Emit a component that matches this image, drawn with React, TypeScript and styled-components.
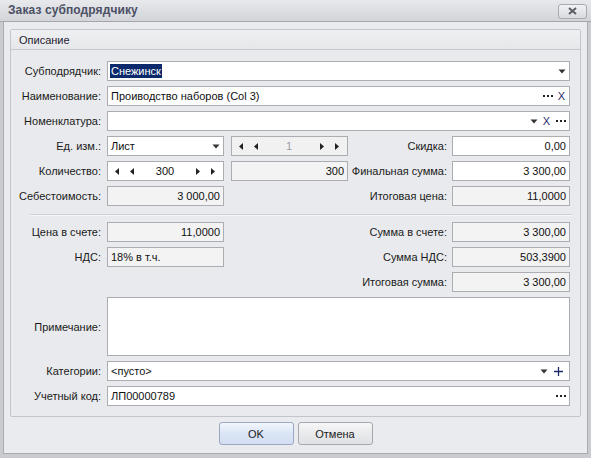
import React from "react";
import styled, { createGlobalStyle } from "styled-components";

const Global = createGlobalStyle`
  html, body { margin: 0; padding: 0; }
  body { width: 591px; height: 458px; overflow: hidden; background: #eaebee; font-family: "Liberation Sans", Arial, sans-serif; }
`;

const Window = styled.div`
  box-sizing: border-box;
  width: 591px;
  height: 458px;
  display: flex;
  flex-direction: column;
  background: #eaebee;
  border-left: 3px solid #c9cbd1;
  border-right: 3px solid #c9cbd1;
  border-bottom: 4px solid #c9cbd1;
  box-shadow: inset 1px 0 0 #a9abb1, inset -1px 0 0 #a9abb1, inset 0 -1px 0 #a9abb1;
`;

const TitleBar = styled.div`
  height: 22px;
  margin: 0 -3px;
  box-sizing: border-box;
  display: flex;
  align-items: center;
  justify-content: space-between;
  padding: 0 4px 1px 8px;
  background: linear-gradient(#e8e9ec, #d2d4d9);
  border-bottom: 1px solid #a4a6ac;
`;

const Title = styled.div`
  font-weight: bold;
  font-size: 12px;
  color: #4b5064;
  letter-spacing: 0.1px;
`;

const CloseButton = styled.div`
  width: 29px;
  height: 15px;
  box-sizing: border-box;
  border: 1px solid #a7a9ae;
  border-radius: 3px;
  background: linear-gradient(#f1f2f4, #d9dadf);
  display: flex;
  align-items: center;
  justify-content: center;
  margin-top: 2px;
`;

const Body = styled.div`
  flex: 1;
  display: flex;
  flex-direction: column;
  padding: 7px 7px 0 7px;
`;

const Group = styled.div`
  border: 1px solid #c3c5cb;
  border-radius: 2px;
  background: #e9eaed;
`;

const GroupHeader = styled.div`
  height: 20px;
  box-sizing: border-box;
  padding: 0 0 0 8px;
  display: flex;
  align-items: center;
  font-size: 11px;
  color: #1e2230;
  background: linear-gradient(#eff0f2, #e6e7ea);
  border-bottom: 1px solid #c6c8cd;
`;

const Form = styled.div`
  display: grid;
  grid-template-columns: 96px 117px 7px 117px 104px 118px;
  grid-auto-rows: auto;
  row-gap: 5px;
  padding: 11px 0 10px 0;
`;

const Label = styled.div<{ $col?: number }>`
  grid-column: ${(p) => p.$col ?? 1};
  display: flex;
  align-items: center;
  justify-content: flex-end;
  padding-right: ${(p) => (p.$col === 5 ? 5 : 6)}px;
  font-size: 11px;
  color: #1a1a1a;
  white-space: nowrap;
`;

const Field = styled.div<{ $span?: string; $ro?: boolean; $right?: boolean; $tall?: boolean }>`
  grid-column: ${(p) => p.$span ?? "2"};
  height: ${(p) => (p.$tall ? 59 : 20)}px;
  box-sizing: border-box;
  border: 1px solid #abadb2;
  background: ${(p) => (p.$ro ? "#f3f3f4" : "#ffffff")};
  display: flex;
  align-items: center;
  justify-content: ${(p) => (p.$right ? "flex-end" : "flex-start")};
  padding: 0 3px 0 3px;
  font-size: 11px;
  color: #111;
  white-space: nowrap;
  overflow: hidden;
`;

const Value = styled.span`
  flex: 1;
`;

const Selected = styled.span`
  background: #0c2a6b;
  color: #fff;
  padding: 1px 1px;
  margin-left: -1px;
`;

const Buttons = styled.div`
  display: flex;
  align-items: center;
  gap: 5px;
  margin-left: 6px;
`;

const Cross = styled.span`
  font-size: 11px;
  color: #1f2b6a;
  line-height: 1;
  padding-right: 1px;
`;

const SepRow = styled.div`
  grid-column: 1 / -1;
  height: 6px;
  display: flex;
  align-items: center;
  padding-left: 19px;
  margin-right: -2px;
`;

const SepLine = styled.div`
  flex: 1;
  height: 1px;
  background: #cdd0d4;
  box-shadow: 0 1px 0 #f7f7f9;
`;

const Spinner = styled.div<{ $ro?: boolean; $span: string }>`
  grid-column: ${(p) => p.$span};
  height: 20px;
  box-sizing: border-box;
  border: 1px solid #abadb2;
  background: ${(p) => (p.$ro ? "#f1f1f2" : "#ffffff")};
  display: flex;
  align-items: center;
  padding: 0 8px 0 7px;
  font-size: 11px;
`;

const SpinValue = styled.span<{ $dim?: boolean }>`
  flex: 1;
  text-align: center;
  color: ${(p) => (p.$dim ? "#9a9ca2" : "#111")};
`;

const Arrows = styled.span`
  display: flex;
  gap: 11px;
`;

const Footer = styled.div`
  flex: 1;
  display: flex;
  justify-content: center;
  align-items: flex-start;
  gap: 4px;
  padding-top: 5px;
`;

const Button = styled.div<{ $primary?: boolean }>`
  width: 75px;
  height: 23px;
  box-sizing: border-box;
  border: 1px solid ${(p) => (p.$primary ? "#9aa8c2" : "#a6a8ae")};
  border-radius: 3px;
  background: ${(p) =>
    p.$primary
      ? "linear-gradient(#f2f6fd, #dbe5f6 50%, #d3def3)"
      : "linear-gradient(#f7f7f8, #e9eaec 50%, #e0e1e5)"};
  display: flex;
  align-items: center;
  justify-content: center;
  font-size: 11px;
  color: #1a1a1a;
`;

const Tri = ({ dir }: { dir: "l" | "r" | "d" }) => {
  if (dir === "d")
    return (
      <svg width="8" height="5" viewBox="0 0 8 5">
        <path d="M0.5 0.5h7L4 4.5z" fill="#333" />
      </svg>
    );
  return (
    <svg width="4" height="7" viewBox="0 0 4 7">
      {dir === "l" ? <path d="M4 0v7L0 3.5z" fill="#222" /> : <path d="M0 0v7l4-3.5z" fill="#222" />}
    </svg>
  );
};

const Dots = () => (
  <svg width="10" height="3" viewBox="0 0 10 3">
    <rect x="0" y="0" width="2" height="2" fill="#222" />
    <rect x="4" y="0" width="2" height="2" fill="#222" />
    <rect x="8" y="0" width="2" height="2" fill="#222" />
  </svg>
);

const PlusIcon = () => (
  <svg width="11" height="9" viewBox="0 0 11 9" style={{ marginRight: 2 }}>
    <path d="M1 4.5h9M5.5 0v9" stroke="#1f2b6a" strokeWidth="1.3" />
  </svg>
);

const SpinBox = ({ value, span, ro, dim }: { value: string; span: string; ro?: boolean; dim?: boolean }) => (
  <Spinner $span={span} $ro={ro}>
    <Arrows>
      <Tri dir="l" />
      <Tri dir="l" />
    </Arrows>
    <SpinValue $dim={dim}>{value}</SpinValue>
    <Arrows>
      <Tri dir="r" />
      <Tri dir="r" />
    </Arrows>
  </Spinner>
);

export default function App() {
  return (
    <>
      <Global />
      <Window>
        <TitleBar>
          <Title>Заказ субподрядчику</Title>
          <CloseButton>
            <svg width="9" height="8" viewBox="0 0 9 8">
              <path d="M1 1l7 6M8 1L1 7" stroke="#5a5d66" strokeWidth="2" />
            </svg>
          </CloseButton>
        </TitleBar>
        <Body>
          <Group>
            <GroupHeader>Описание</GroupHeader>
            <Form>
              <Label>Субподрядчик:</Label>
              <Field $span="2 / 7">
                <Value>
                  <Selected>Снежинск</Selected>
                </Value>
                <Buttons>
                  <Tri dir="d" />
                </Buttons>
              </Field>

              <Label>Наименование:</Label>
              <Field $span="2 / 7">
                <Value>Проиводство наборов (Col 3)</Value>
                <Buttons>
                  <Dots />
                  <Cross>X</Cross>
                </Buttons>
              </Field>

              <Label>Номенклатура:</Label>
              <Field $span="2 / 7">
                <Value />
                <Buttons>
                  <Tri dir="d" />
                  <Cross>X</Cross>
                  <Dots />
                </Buttons>
              </Field>

              <Label>Ед. изм.:</Label>
              <Field>
                <Value>Лист</Value>
                <Buttons>
                  <Tri dir="d" />
                </Buttons>
              </Field>
              <SpinBox span="4" value="1" ro dim />
              <Label $col={5}>Скидка:</Label>
              <Field $span="6" $right>0,00</Field>

              <Label>Количество:</Label>
              <SpinBox span="2" value="300" />
              <Field $span="4" $ro $right>300</Field>
              <Label $col={5}>Финальная сумма:</Label>
              <Field $span="6" $right>3 300,00</Field>

              <Label>Себестоимость:</Label>
              <Field $ro $right>3 000,00</Field>
              <Label $col={5}>Итоговая цена:</Label>
              <Field $span="6" $ro $right>11,0000</Field>

              <SepRow>
                <SepLine />
              </SepRow>

              <Label>Цена в счете:</Label>
              <Field $ro $right>11,0000</Field>
              <Label $col={5}>Сумма в счете:</Label>
              <Field $span="6" $ro $right>3 300,00</Field>

              <Label>НДС:</Label>
              <Field $ro>18% в т.ч.</Field>
              <Label $col={5}>Сумма НДС:</Label>
              <Field $span="6" $ro $right>503,3900</Field>

              <Label $col={5}>Итоговая сумма:</Label>
              <Field $span="6" $ro $right>3 300,00</Field>

              <Label>Примечание:</Label>
              <Field $span="2 / 7" $tall />

              <Label>Категории:</Label>
              <Field $span="2 / 7">
                <Value>&lt;пусто&gt;</Value>
                <Buttons>
                  <Tri dir="d" />
                  <PlusIcon />
                </Buttons>
              </Field>

              <Label>Учетный код:</Label>
              <Field $span="2 / 7">
                <Value>ЛП00000789</Value>
                <Buttons>
                  <Dots />
                </Buttons>
              </Field>
            </Form>
          </Group>
          <Footer>
            <Button $primary>OK</Button>
            <Button>Отмена</Button>
          </Footer>
        </Body>
      </Window>
    </>
  );
}
